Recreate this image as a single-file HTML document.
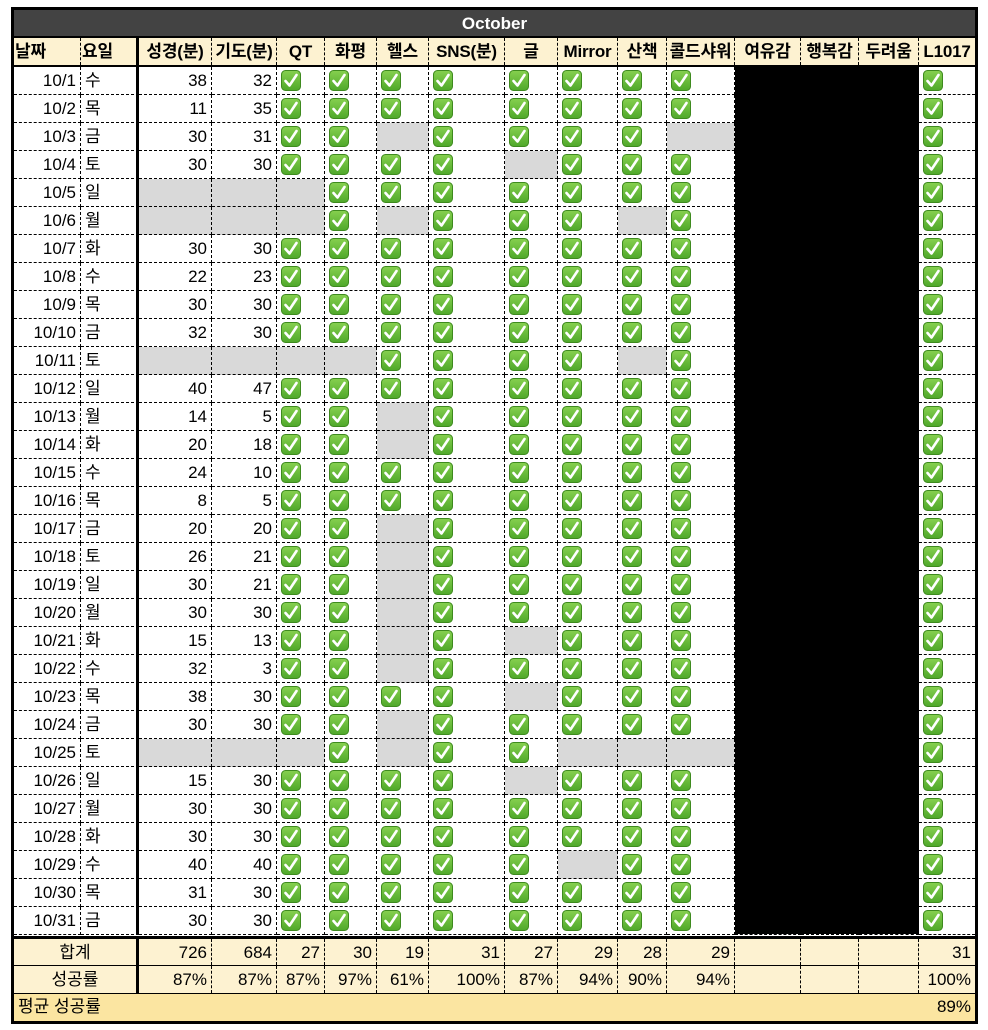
<!DOCTYPE html>
<html><head><meta charset="utf-8">
<style>
*{margin:0;padding:0;box-sizing:border-box}
body{width:988px;height:1030px;background:#fff;position:relative;font-family:"Liberation Sans","Noto Sans CJK KR",sans-serif;font-size:17px;color:#000}
#w{position:absolute;left:11px;top:7px;width:967px;border:3px solid #000;background:#fff}
.t{height:28px;background:#434343;color:#fff;font-weight:bold;text-align:center;line-height:28px;border-bottom:2px solid #000}
.r{display:grid;grid-template-columns:67px 58px 73px 65px 48px 52px 52px 76px 53px 60px 49px 68px 66px 58px 60px 56px;height:28px}
.r>div{border-right:1px dashed #000;border-bottom:1px dashed #000;line-height:27px;padding:0 4px;white-space:nowrap;overflow:hidden}
.r>div:nth-child(2){border-right:3px solid #000}
.r>div:nth-child(16){border-right:none}
.f>div:nth-child(2){border-right:1px dashed #000}
.h{background:#fdf2d1;font-weight:bold;text-align:center;border-bottom:2px solid #000;height:29px}
.h>div{border-bottom:none!important;padding:0 1px;letter-spacing:-0.2px}
.n{text-align:right}
.g{background:#d9d9d9}
.r svg{width:20px;height:21px;margin-top:3px;display:block}
.sep{height:4px;border-top:1px solid #fff;background:#000}
.f{background:#fdf2d1;height:27px}
.f>div{border-bottom:none!important}
.f1{border-bottom:1px solid #000}
.f2{height:28px;border-bottom:1px solid #000}
.avg{height:27px;background:#fbe5a1;line-height:26px;padding:0 4px;display:flex;justify-content:space-between}
#blk{position:absolute;left:735px;top:66px;width:184px;height:868px;background:#000}
</style></head><body>
<svg width="0" height="0" style="position:absolute"><defs>
<linearGradient id="gg" x1="0" y1="0" x2="0" y2="1"><stop offset="0" stop-color="#86d04f"/><stop offset="1" stop-color="#4fa82a"/></linearGradient>
<symbol id="k" viewBox="0 0 20 21"><rect x="0.5" y="0.5" width="19" height="20" rx="4" fill="url(#gg)" stroke="#3e8a1e"/><path d="M4.5 11 L8.5 15.5 L15.5 5" fill="none" stroke="#fff" stroke-width="2.6" stroke-linecap="round" stroke-linejoin="round"/></symbol>
</defs></svg>
<div id="w">
<div class="t">October</div>
<div class="r h"><div style="text-align:left">날짜</div><div style="text-align:left">요일</div><div>성경(분)</div><div>기도(분)</div><div>QT</div><div>화평</div><div>헬스</div><div>SNS(분)</div><div>글</div><div>Mirror</div><div>산책</div><div>콜드샤워</div><div>여유감</div><div>행복감</div><div>두려움</div><div>L1017</div></div>

<div class="r"><div class="n">10/1</div><div>수</div><div class="n">38</div><div class="n">32</div><div><svg><use href="#k"/></svg></div><div><svg><use href="#k"/></svg></div><div><svg><use href="#k"/></svg></div><div><svg><use href="#k"/></svg></div><div><svg><use href="#k"/></svg></div><div><svg><use href="#k"/></svg></div><div><svg><use href="#k"/></svg></div><div><svg><use href="#k"/></svg></div><div></div><div></div><div></div><div><svg><use href="#k"/></svg></div></div>
<div class="r"><div class="n">10/2</div><div>목</div><div class="n">11</div><div class="n">35</div><div><svg><use href="#k"/></svg></div><div><svg><use href="#k"/></svg></div><div><svg><use href="#k"/></svg></div><div><svg><use href="#k"/></svg></div><div><svg><use href="#k"/></svg></div><div><svg><use href="#k"/></svg></div><div><svg><use href="#k"/></svg></div><div><svg><use href="#k"/></svg></div><div></div><div></div><div></div><div><svg><use href="#k"/></svg></div></div>
<div class="r"><div class="n">10/3</div><div>금</div><div class="n">30</div><div class="n">31</div><div><svg><use href="#k"/></svg></div><div><svg><use href="#k"/></svg></div><div class="g"></div><div><svg><use href="#k"/></svg></div><div><svg><use href="#k"/></svg></div><div><svg><use href="#k"/></svg></div><div><svg><use href="#k"/></svg></div><div class="g"></div><div></div><div></div><div></div><div><svg><use href="#k"/></svg></div></div>
<div class="r"><div class="n">10/4</div><div>토</div><div class="n">30</div><div class="n">30</div><div><svg><use href="#k"/></svg></div><div><svg><use href="#k"/></svg></div><div><svg><use href="#k"/></svg></div><div><svg><use href="#k"/></svg></div><div class="g"></div><div><svg><use href="#k"/></svg></div><div><svg><use href="#k"/></svg></div><div><svg><use href="#k"/></svg></div><div></div><div></div><div></div><div><svg><use href="#k"/></svg></div></div>
<div class="r"><div class="n">10/5</div><div>일</div><div class="g"></div><div class="g"></div><div class="g"></div><div><svg><use href="#k"/></svg></div><div><svg><use href="#k"/></svg></div><div><svg><use href="#k"/></svg></div><div><svg><use href="#k"/></svg></div><div><svg><use href="#k"/></svg></div><div><svg><use href="#k"/></svg></div><div><svg><use href="#k"/></svg></div><div></div><div></div><div></div><div><svg><use href="#k"/></svg></div></div>
<div class="r"><div class="n">10/6</div><div>월</div><div class="g"></div><div class="g"></div><div class="g"></div><div><svg><use href="#k"/></svg></div><div class="g"></div><div><svg><use href="#k"/></svg></div><div><svg><use href="#k"/></svg></div><div><svg><use href="#k"/></svg></div><div class="g"></div><div><svg><use href="#k"/></svg></div><div></div><div></div><div></div><div><svg><use href="#k"/></svg></div></div>
<div class="r"><div class="n">10/7</div><div>화</div><div class="n">30</div><div class="n">30</div><div><svg><use href="#k"/></svg></div><div><svg><use href="#k"/></svg></div><div><svg><use href="#k"/></svg></div><div><svg><use href="#k"/></svg></div><div><svg><use href="#k"/></svg></div><div><svg><use href="#k"/></svg></div><div><svg><use href="#k"/></svg></div><div><svg><use href="#k"/></svg></div><div></div><div></div><div></div><div><svg><use href="#k"/></svg></div></div>
<div class="r"><div class="n">10/8</div><div>수</div><div class="n">22</div><div class="n">23</div><div><svg><use href="#k"/></svg></div><div><svg><use href="#k"/></svg></div><div><svg><use href="#k"/></svg></div><div><svg><use href="#k"/></svg></div><div><svg><use href="#k"/></svg></div><div><svg><use href="#k"/></svg></div><div><svg><use href="#k"/></svg></div><div><svg><use href="#k"/></svg></div><div></div><div></div><div></div><div><svg><use href="#k"/></svg></div></div>
<div class="r"><div class="n">10/9</div><div>목</div><div class="n">30</div><div class="n">30</div><div><svg><use href="#k"/></svg></div><div><svg><use href="#k"/></svg></div><div><svg><use href="#k"/></svg></div><div><svg><use href="#k"/></svg></div><div><svg><use href="#k"/></svg></div><div><svg><use href="#k"/></svg></div><div><svg><use href="#k"/></svg></div><div><svg><use href="#k"/></svg></div><div></div><div></div><div></div><div><svg><use href="#k"/></svg></div></div>
<div class="r"><div class="n">10/10</div><div>금</div><div class="n">32</div><div class="n">30</div><div><svg><use href="#k"/></svg></div><div><svg><use href="#k"/></svg></div><div><svg><use href="#k"/></svg></div><div><svg><use href="#k"/></svg></div><div><svg><use href="#k"/></svg></div><div><svg><use href="#k"/></svg></div><div><svg><use href="#k"/></svg></div><div><svg><use href="#k"/></svg></div><div></div><div></div><div></div><div><svg><use href="#k"/></svg></div></div>
<div class="r"><div class="n">10/11</div><div>토</div><div class="g"></div><div class="g"></div><div class="g"></div><div class="g"></div><div><svg><use href="#k"/></svg></div><div><svg><use href="#k"/></svg></div><div><svg><use href="#k"/></svg></div><div><svg><use href="#k"/></svg></div><div class="g"></div><div><svg><use href="#k"/></svg></div><div></div><div></div><div></div><div><svg><use href="#k"/></svg></div></div>
<div class="r"><div class="n">10/12</div><div>일</div><div class="n">40</div><div class="n">47</div><div><svg><use href="#k"/></svg></div><div><svg><use href="#k"/></svg></div><div><svg><use href="#k"/></svg></div><div><svg><use href="#k"/></svg></div><div><svg><use href="#k"/></svg></div><div><svg><use href="#k"/></svg></div><div><svg><use href="#k"/></svg></div><div><svg><use href="#k"/></svg></div><div></div><div></div><div></div><div><svg><use href="#k"/></svg></div></div>
<div class="r"><div class="n">10/13</div><div>월</div><div class="n">14</div><div class="n">5</div><div><svg><use href="#k"/></svg></div><div><svg><use href="#k"/></svg></div><div class="g"></div><div><svg><use href="#k"/></svg></div><div><svg><use href="#k"/></svg></div><div><svg><use href="#k"/></svg></div><div><svg><use href="#k"/></svg></div><div><svg><use href="#k"/></svg></div><div></div><div></div><div></div><div><svg><use href="#k"/></svg></div></div>
<div class="r"><div class="n">10/14</div><div>화</div><div class="n">20</div><div class="n">18</div><div><svg><use href="#k"/></svg></div><div><svg><use href="#k"/></svg></div><div class="g"></div><div><svg><use href="#k"/></svg></div><div><svg><use href="#k"/></svg></div><div><svg><use href="#k"/></svg></div><div><svg><use href="#k"/></svg></div><div><svg><use href="#k"/></svg></div><div></div><div></div><div></div><div><svg><use href="#k"/></svg></div></div>
<div class="r"><div class="n">10/15</div><div>수</div><div class="n">24</div><div class="n">10</div><div><svg><use href="#k"/></svg></div><div><svg><use href="#k"/></svg></div><div><svg><use href="#k"/></svg></div><div><svg><use href="#k"/></svg></div><div><svg><use href="#k"/></svg></div><div><svg><use href="#k"/></svg></div><div><svg><use href="#k"/></svg></div><div><svg><use href="#k"/></svg></div><div></div><div></div><div></div><div><svg><use href="#k"/></svg></div></div>
<div class="r"><div class="n">10/16</div><div>목</div><div class="n">8</div><div class="n">5</div><div><svg><use href="#k"/></svg></div><div><svg><use href="#k"/></svg></div><div><svg><use href="#k"/></svg></div><div><svg><use href="#k"/></svg></div><div><svg><use href="#k"/></svg></div><div><svg><use href="#k"/></svg></div><div><svg><use href="#k"/></svg></div><div><svg><use href="#k"/></svg></div><div></div><div></div><div></div><div><svg><use href="#k"/></svg></div></div>
<div class="r"><div class="n">10/17</div><div>금</div><div class="n">20</div><div class="n">20</div><div><svg><use href="#k"/></svg></div><div><svg><use href="#k"/></svg></div><div class="g"></div><div><svg><use href="#k"/></svg></div><div><svg><use href="#k"/></svg></div><div><svg><use href="#k"/></svg></div><div><svg><use href="#k"/></svg></div><div><svg><use href="#k"/></svg></div><div></div><div></div><div></div><div><svg><use href="#k"/></svg></div></div>
<div class="r"><div class="n">10/18</div><div>토</div><div class="n">26</div><div class="n">21</div><div><svg><use href="#k"/></svg></div><div><svg><use href="#k"/></svg></div><div class="g"></div><div><svg><use href="#k"/></svg></div><div><svg><use href="#k"/></svg></div><div><svg><use href="#k"/></svg></div><div><svg><use href="#k"/></svg></div><div><svg><use href="#k"/></svg></div><div></div><div></div><div></div><div><svg><use href="#k"/></svg></div></div>
<div class="r"><div class="n">10/19</div><div>일</div><div class="n">30</div><div class="n">21</div><div><svg><use href="#k"/></svg></div><div><svg><use href="#k"/></svg></div><div class="g"></div><div><svg><use href="#k"/></svg></div><div><svg><use href="#k"/></svg></div><div><svg><use href="#k"/></svg></div><div><svg><use href="#k"/></svg></div><div><svg><use href="#k"/></svg></div><div></div><div></div><div></div><div><svg><use href="#k"/></svg></div></div>
<div class="r"><div class="n">10/20</div><div>월</div><div class="n">30</div><div class="n">30</div><div><svg><use href="#k"/></svg></div><div><svg><use href="#k"/></svg></div><div class="g"></div><div><svg><use href="#k"/></svg></div><div><svg><use href="#k"/></svg></div><div><svg><use href="#k"/></svg></div><div><svg><use href="#k"/></svg></div><div><svg><use href="#k"/></svg></div><div></div><div></div><div></div><div><svg><use href="#k"/></svg></div></div>
<div class="r"><div class="n">10/21</div><div>화</div><div class="n">15</div><div class="n">13</div><div><svg><use href="#k"/></svg></div><div><svg><use href="#k"/></svg></div><div class="g"></div><div><svg><use href="#k"/></svg></div><div class="g"></div><div><svg><use href="#k"/></svg></div><div><svg><use href="#k"/></svg></div><div><svg><use href="#k"/></svg></div><div></div><div></div><div></div><div><svg><use href="#k"/></svg></div></div>
<div class="r"><div class="n">10/22</div><div>수</div><div class="n">32</div><div class="n">3</div><div><svg><use href="#k"/></svg></div><div><svg><use href="#k"/></svg></div><div class="g"></div><div><svg><use href="#k"/></svg></div><div><svg><use href="#k"/></svg></div><div><svg><use href="#k"/></svg></div><div><svg><use href="#k"/></svg></div><div><svg><use href="#k"/></svg></div><div></div><div></div><div></div><div><svg><use href="#k"/></svg></div></div>
<div class="r"><div class="n">10/23</div><div>목</div><div class="n">38</div><div class="n">30</div><div><svg><use href="#k"/></svg></div><div><svg><use href="#k"/></svg></div><div><svg><use href="#k"/></svg></div><div><svg><use href="#k"/></svg></div><div class="g"></div><div><svg><use href="#k"/></svg></div><div><svg><use href="#k"/></svg></div><div><svg><use href="#k"/></svg></div><div></div><div></div><div></div><div><svg><use href="#k"/></svg></div></div>
<div class="r"><div class="n">10/24</div><div>금</div><div class="n">30</div><div class="n">30</div><div><svg><use href="#k"/></svg></div><div><svg><use href="#k"/></svg></div><div class="g"></div><div><svg><use href="#k"/></svg></div><div><svg><use href="#k"/></svg></div><div><svg><use href="#k"/></svg></div><div><svg><use href="#k"/></svg></div><div><svg><use href="#k"/></svg></div><div></div><div></div><div></div><div><svg><use href="#k"/></svg></div></div>
<div class="r"><div class="n">10/25</div><div>토</div><div class="g"></div><div class="g"></div><div class="g"></div><div><svg><use href="#k"/></svg></div><div class="g"></div><div><svg><use href="#k"/></svg></div><div><svg><use href="#k"/></svg></div><div class="g"></div><div class="g"></div><div class="g"></div><div></div><div></div><div></div><div><svg><use href="#k"/></svg></div></div>
<div class="r"><div class="n">10/26</div><div>일</div><div class="n">15</div><div class="n">30</div><div><svg><use href="#k"/></svg></div><div><svg><use href="#k"/></svg></div><div><svg><use href="#k"/></svg></div><div><svg><use href="#k"/></svg></div><div class="g"></div><div><svg><use href="#k"/></svg></div><div><svg><use href="#k"/></svg></div><div><svg><use href="#k"/></svg></div><div></div><div></div><div></div><div><svg><use href="#k"/></svg></div></div>
<div class="r"><div class="n">10/27</div><div>월</div><div class="n">30</div><div class="n">30</div><div><svg><use href="#k"/></svg></div><div><svg><use href="#k"/></svg></div><div><svg><use href="#k"/></svg></div><div><svg><use href="#k"/></svg></div><div><svg><use href="#k"/></svg></div><div><svg><use href="#k"/></svg></div><div><svg><use href="#k"/></svg></div><div><svg><use href="#k"/></svg></div><div></div><div></div><div></div><div><svg><use href="#k"/></svg></div></div>
<div class="r"><div class="n">10/28</div><div>화</div><div class="n">30</div><div class="n">30</div><div><svg><use href="#k"/></svg></div><div><svg><use href="#k"/></svg></div><div><svg><use href="#k"/></svg></div><div><svg><use href="#k"/></svg></div><div><svg><use href="#k"/></svg></div><div><svg><use href="#k"/></svg></div><div><svg><use href="#k"/></svg></div><div><svg><use href="#k"/></svg></div><div></div><div></div><div></div><div><svg><use href="#k"/></svg></div></div>
<div class="r"><div class="n">10/29</div><div>수</div><div class="n">40</div><div class="n">40</div><div><svg><use href="#k"/></svg></div><div><svg><use href="#k"/></svg></div><div><svg><use href="#k"/></svg></div><div><svg><use href="#k"/></svg></div><div><svg><use href="#k"/></svg></div><div class="g"></div><div><svg><use href="#k"/></svg></div><div><svg><use href="#k"/></svg></div><div></div><div></div><div></div><div><svg><use href="#k"/></svg></div></div>
<div class="r"><div class="n">10/30</div><div>목</div><div class="n">31</div><div class="n">30</div><div><svg><use href="#k"/></svg></div><div><svg><use href="#k"/></svg></div><div><svg><use href="#k"/></svg></div><div><svg><use href="#k"/></svg></div><div><svg><use href="#k"/></svg></div><div><svg><use href="#k"/></svg></div><div><svg><use href="#k"/></svg></div><div><svg><use href="#k"/></svg></div><div></div><div></div><div></div><div><svg><use href="#k"/></svg></div></div>
<div class="r"><div class="n">10/31</div><div>금</div><div class="n">30</div><div class="n">30</div><div><svg><use href="#k"/></svg></div><div><svg><use href="#k"/></svg></div><div><svg><use href="#k"/></svg></div><div><svg><use href="#k"/></svg></div><div><svg><use href="#k"/></svg></div><div><svg><use href="#k"/></svg></div><div><svg><use href="#k"/></svg></div><div><svg><use href="#k"/></svg></div><div></div><div></div><div></div><div><svg><use href="#k"/></svg></div></div>

<div class="sep"></div>
<div class="r f f1"><div style="grid-column:1/3;text-align:center;border-right:3px solid #000">합계</div><div class="n">726</div><div class="n">684</div><div class="n">27</div><div class="n">30</div><div class="n">19</div><div class="n">31</div><div class="n">27</div><div class="n">29</div><div class="n">28</div><div class="n">29</div><div></div><div></div><div></div><div class="n" style="border-right:none">31</div></div>
<div class="r f f2"><div style="grid-column:1/3;text-align:center;border-right:3px solid #000">성공률</div><div class="n">87%</div><div class="n">87%</div><div class="n">87%</div><div class="n">97%</div><div class="n">61%</div><div class="n">100%</div><div class="n">87%</div><div class="n">94%</div><div class="n">90%</div><div class="n">94%</div><div></div><div></div><div></div><div class="n" style="border-right:none">100%</div></div>
<div class="avg"><span>평균 성공률</span><span>89%</span></div>
</div>
<div id="blk"></div>
</body></html>
